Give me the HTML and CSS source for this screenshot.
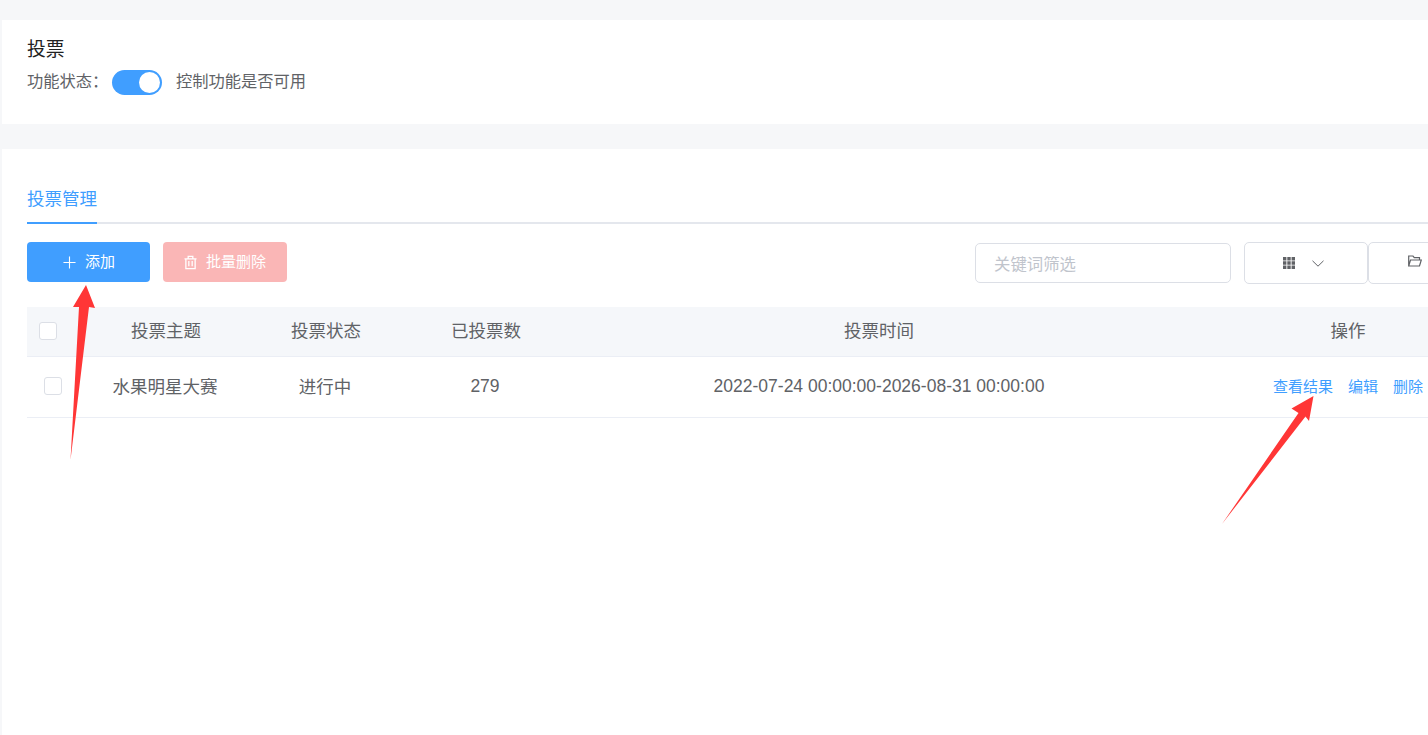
FILE: index.html
```html
<!DOCTYPE html>
<html lang="zh-CN">
<head>
    <meta charset="UTF-8">
    <title>投票</title>
    <link rel="stylesheet" href="styles.css">
</head>
<body>
    <div class="page">
        <div class="card status-card">
            <div class="status-title">投票</div>
            <div class="status-line">
                <span class="status-label">功能状态：</span>
                <span class="switch"><span class="switch-dot"></span></span>
                <span class="status-hint">控制功能是否可用</span>
            </div>
        </div>

        <div class="card manage-card">
            <div class="tabs">
                <div class="tab-active">投票管理</div>
            </div>

            <div class="toolbar">
                <button class="btn btn-primary">
                    <svg class="btn-icon" viewBox="0 0 14 14"><path d="M7 .5v13M.5 7h13" fill="none" stroke="#fff" stroke-width="1.2"/></svg>
                    <span class="btn-text">添加</span>
                </button>
                <button class="btn btn-danger">
                    <svg class="trash-icon" viewBox="0 0 14 15"><path d="M.5 3.500h13M4.500 3.500V1h5v2.500M2 3.500V14h10V3.500M5.200 6v5.500M8.800 6v5.500" fill="none" stroke="#fff" stroke-width="1.400"/></svg>
                    <span class="btn-text">批量删除</span>
                </button>
                <div class="toolbar-right">
                    <div class="search"><span class="search-text">关键词筛选</span></div>
                    <div class="tool-btn">
                        <svg class="grid-icon" viewBox="0 0 12 12"><path d="M0 0h3.400v3.400H0zM4.300 0h3.400v3.400H4.300zM8.600 0H12v3.400H8.600zM0 4.300h3.400v3.400H0zM4.300 4.300h3.400v3.400H4.300zM8.600 4.300H12v3.400H8.600zM0 8.600h3.400V12H0zM4.300 8.600h3.400V12H4.300zM8.600 8.600H12V12H8.600z" fill="#606266"/></svg>
                        <svg class="chevron-icon" viewBox="0 0 12 7"><path d="M.5.8 6 6.200 11.500.8" fill="none" stroke="#606266" stroke-width="1"/></svg>
                    </div>
                    <div class="tool-btn tool-btn-last">
                        <svg class="folder-icon" viewBox="0 0 14 12"><path d="M.7 11V1h4.300l1.300 1.600h5.200V5M.7 11h10.800L13.300 5H2.500z" fill="none" stroke="#606266" stroke-width="1.200"/></svg>
                    </div>
                </div>
            </div>

            <div class="vote-table">
                <div class="table-row table-head">
                    <div class="cell-check"><span class="checkbox"></span></div>
                    <div>投票主题</div>
                    <div>投票状态</div>
                    <div>已投票数</div>
                    <div>投票时间</div>
                    <div>操作</div>
                </div>
                <div class="table-row table-body">
                    <div class="cell-check"><span class="checkbox"></span></div>
                    <div>水果明星大赛</div>
                    <div>进行中</div>
                    <div class="cell-latin">279</div>
                    <div class="cell-latin">2022-07-24 00:00:00-2026-08-31 00:00:00</div>
                    <div class="actions">
                        <a class="action-link">查看结果</a>
                        <a class="action-link">编辑</a>
                        <a class="action-link">删除</a>
                    </div>
                </div>
            </div>
        </div>
    </div>

    <!-- red annotation arrows drawn over the screenshot -->
    <svg class="arrows" viewBox="0 0 1428 735">
        <polygon points="86,285 73,307 79,307 70.500,460 89,307 95,308" fill="#ff3636"/>
        <polygon points="1313.500,396 1291.500,408.500 1298.500,413 1222,524 1305.500,416.500 1309,421" fill="#ff3636"/>
    </svg>
</body>
</html>
```

FILE: styles.css
```css
* {
    box-sizing: border-box;
    margin: 0;
    padding: 0;
}

html, body {
    height: 100%;
    overflow: hidden;
}

body {
    background-color: #f6f7f9;
    font-family: "Liberation Sans", "Noto Sans CJK SC", sans-serif;
    color: #606266;
    position: relative;
}

.page {
    width: 1426px;
    margin-left: 2px;
    height: 735px;
    padding-top: 20px;
    display: flex;
    flex-direction: column;
    gap: 25px;
    overflow: hidden;
}

.card {
    background-color: #fff;
}

.status-card {
    height: 104px;
    padding: 18px 0 0 25px;
}

.status-title {
    font-size: 18.750px;
    line-height: 24px;
    color: #222;
}

.status-line {
    display: flex;
    align-items: center;
    margin-top: 8px;
    font-size: 16.250px;
    height: 25px;
}

.status-label,
.status-hint {
    position: relative;
    top: -3px;
}

.status-label {
    width: 85px;
}

.switch {
    width: 50px;
    height: 25px;
    border-radius: 13px;
    background-color: #409eff;
    display: flex;
    align-items: center;
    justify-content: flex-end;
    padding-right: 2px;
}

.switch-dot {
    width: 21px;
    height: 21px;
    border-radius: 50%;
    background-color: #fff;
}

.status-hint {
    margin-left: 14px;
}

.manage-card {
    flex: 1;
    padding: 29px 0 0 25px;
}

.tabs {
    height: 46px;
    border-bottom: 2px solid #e4e7ed;
}

.tab-active {
    width: 70px;
    height: 46px;
    line-height: 42px;
    font-size: 17.500px;
    color: #409eff;
    border-bottom: 2px solid #409eff;
    white-space: nowrap;
}

.toolbar {
    display: flex;
    align-items: flex-start;
    height: 42px;
    margin-top: 18px;
}

.toolbar > * {
    flex: none;
}

.btn {
    height: 40px;
    width: 123px;
    border: none;
    border-radius: 4px;
    color: #fff;
    font-family: inherit;
    font-size: 15px;
    display: flex;
    align-items: center;
    justify-content: center;
    gap: 9px;
}

.btn-text {
    position: relative;
    top: -2px;
}

.btn-primary {
    background-color: #409eff;
    padding-left: 1px;
}

.btn-danger {
    width: 124px;
    margin-left: 13px;
    background-color: #fab6b6;
}

.btn-icon {
    width: 13px;
    height: 13px;
}

.trash-icon {
    width: 13px;
    height: 15px;
}

.toolbar-right {
    display: flex;
    align-items: flex-start;
    margin-left: 688px;
}

.search {
    flex: none;
    width: 256px;
    height: 40px;
    margin-top: 1px;
    line-height: 38px;
    padding-left: 18px;
    border: 1px solid #dcdfe6;
    border-radius: 5px;
    font-size: 16.400px;
    color: #c0c4cc;
}

.search-text {
    position: relative;
    top: 1px;
}

.tool-btn {
    flex: none;
    width: 124px;
    height: 42px;
    margin-left: 13px;
    border: 1px solid #dcdfe6;
    border-radius: 5px;
    display: flex;
    align-items: center;
    padding-left: 38px;
    gap: 17px;
}

.tool-btn-last {
    margin-left: 0;
    padding-left: 39px;
}

.grid-icon {
    width: 12px;
    height: 12px;
}

.chevron-icon {
    width: 12px;
    height: 7px;
    margin-top: 1px;
}

.folder-icon {
    width: 14px;
    height: 12px;
    margin-top: -4px;
}

.vote-table {
    margin-top: 23px;
    font-size: 17.500px;
}

.table-row {
    display: grid;
    align-items: center;
    text-align: center;
    padding-bottom: 4px;
}

.table-head {
    grid-template-columns: 59px 160px 160px 160px 626px 312px;
    height: 50px;
    background-color: #f5f7fa;
    border-bottom: 1px solid #ebeef5;
}

.table-body {
    grid-template-columns: 58px 160px 160px 160px 628px 314px;
    height: 61px;
    border-bottom: 1px solid #ebeef5;
}

.table-head .cell-check {
    padding-right: 17px;
    padding-top: 2px;
}

.table-body .cell-check {
    padding-right: 6px;
    padding-top: 2px;
}

.cell-latin {
    padding-top: 2px;
}

.checkbox {
    display: block;
    margin: 0 auto;
    width: 18px;
    height: 18px;
    border: 1px solid #dcdfe6;
    border-radius: 3px;
    background-color: #fff;
}

.actions {
    display: flex;
    gap: 15px;
    padding-left: 80px;
    white-space: nowrap;
}

.action-link {
    font-size: 15px;
    color: #409eff;
}

.arrows {
    position: absolute;
    left: 0;
    top: 0;
    width: 1428px;
    height: 735px;
    pointer-events: none;
}
```
